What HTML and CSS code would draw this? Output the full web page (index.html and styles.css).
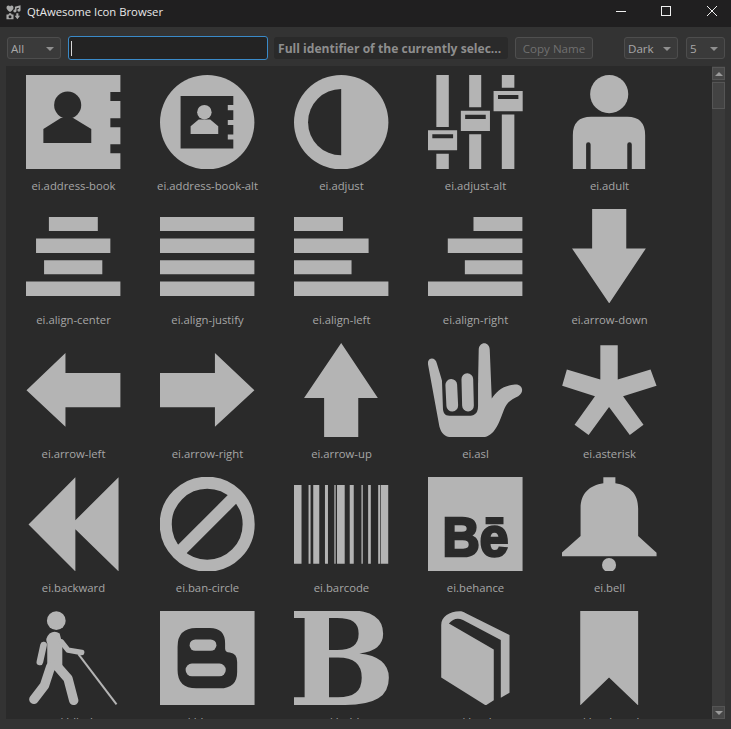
FILE: index.html
```html
<!DOCTYPE html>
<html lang="en">
<head>
<meta charset="utf-8">
<title>QtAwesome Icon Browser</title>
<link rel="stylesheet" href="styles.css">
</head>
<body>
<div class="window">
  <header class="titlebar">
    <svg class="appicon" viewBox="0 0 16 16" aria-hidden="true">
      <path d="M.5 2.800Q.5.500 2.500.500 3.700.500 4.300 1.700 4.900.500 6.100.500 8 .500 8 2.800 8 4.800 4.300 7.500.5 4.800.5 2.800Z"/>
      <path d="M9.500 1.800 15.500.3V5.600A1.700 1.500 0 1 1 13.800 4.100V2.800L11.200 3.400V6.400A1.700 1.500 0 1 1 9.500 4.900Z"/>
      <path d="M.5 10H2.600L3.300 8.700H5.400L6.100 10H8V15.300H.5ZM4.300 10.900A1.600 1.600 0 1 0 4.300 14.100 1.600 1.600 0 1 0 4.300 10.900Z" fill-rule="evenodd"/>
      <path d="M11 8.700H13.200V11.500H15L12.100 15.300 9.300 11.500H11Z"/>
    </svg>
    <span class="title">QtAwesome Icon Browser</span>
    <div class="winbtns">
      <svg class="winbtn" viewBox="0 0 46 27" aria-hidden="true"><path d="M22 11.500H32"/></svg>
      <svg class="winbtn" viewBox="0 0 46 27" aria-hidden="true"><rect x="22.500" y="6.500" width="9" height="9"/></svg>
      <svg class="winbtn" viewBox="0 0 46 27" aria-hidden="true"><path d="M22 6 32 16M32 6 22 16"/></svg>
    </div>
  </header>

  <div class="toolbar">
    <div class="combo combo-all"><span>All</span><i class="caret"></i></div>
    <div class="search"><i class="cursor"></i></div>
    <div class="namebox">Full identifier of the currently selec...</div>
    <div class="copy">Copy Name</div>
    <div class="spacer"></div>
    <div class="combo combo-dark"><span>Dark</span><i class="caret"></i></div>
    <div class="combo combo-five"><span>5</span><i class="caret"></i></div>
  </div>

  <main class="panel">
    <div class="grid">

      <figure class="cell">
        <svg class="icon" viewBox="0 0 94 94"><path class="fg" d="M0 0H94V17H84V26H94V43H84V52H94V69H84V78H94V94H0Z"/><circle class="bg" cx="41.500" cy="30" r="13.500"/><path class="bg" d="M17.300 53.700 34.700 42.700H47L65 53.700V67.700H17.300Z"/></svg>
        <figcaption>ei.address-book</figcaption>
      </figure>
      <figure class="cell">
        <svg class="icon" viewBox="0 0 94 94"><circle class="fg" cx="47" cy="47" r="47"/><path class="bg" d="M20.500 21H73V30H67.500V35H73V44.700H67.500V49.700H73V59.300H67.500V64.300H73V73.300H20.500Z"/><circle class="fg" cx="44.200" cy="37" r="7.200"/><path class="fg" d="M30.500 51 38.500 44.300H50L58 51V58.700H30.500Z"/></svg>
        <figcaption>ei.address-book-alt</figcaption>
      </figure>
      <figure class="cell">
        <svg class="icon" viewBox="0 0 94 94"><circle class="fg" cx="47" cy="47" r="47"/><path class="bg" d="M47 14A33 33 0 0 0 47 80Z"/></svg>
        <figcaption>ei.adjust</figcaption>
      </figure>
      <figure class="cell">
        <svg class="icon" viewBox="0 0 94 94"><path class="fg" d="M8.300 0H20.700V51.700H8.300ZM8.300 78.300H20.700V94H8.300ZM41 0H53V32H41ZM41 59H53V94H41ZM73.500 0H86V12.700H73.500ZM73.500 39.300H86V94H73.500Z"/><path class="fg" fill-rule="evenodd" d="M0 55H29V75H0ZM4.300 59V63H25V59ZM32.700 35.700H61.700V55.700H32.700ZM37 39.700V43.700H57.500V39.700ZM65.300 16H94.300V36H65.300ZM69.700 20V24H90V20Z"/></svg>
        <figcaption>ei.adjust-alt</figcaption>
      </figure>
      <figure class="cell">
        <svg class="icon" viewBox="0 0 94 94"><circle class="fg" cx="47" cy="19" r="19"/><path class="fg" d="M29 41.700H65Q82.800 41.700 82.800 60V94H69.500V69.300A2.200 2.200 0 0 0 65 69.300V94H28.500V69.300A2.200 2.200 0 0 0 24 69.300V94H10.800V60Q10.800 41.700 29 41.700Z"/></svg>
        <figcaption>ei.adult</figcaption>
      </figure>

      <figure class="cell">
        <svg class="icon" viewBox="0 0 94 94"><path class="fg" d="M22.800 8H71.500V22H22.800ZM10 29.500H84V43.700H10ZM18 51H76V65H18ZM0 72.300H94V86.700H0Z"/></svg>
        <figcaption>ei.align-center</figcaption>
      </figure>
      <figure class="cell">
        <svg class="icon" viewBox="0 0 94 94"><path class="fg" d="M0 8H94V22H0ZM0 29.500H94V43.700H0ZM0 51H94V65H0ZM0 72.300H94V86.700H0Z"/></svg>
        <figcaption>ei.align-justify</figcaption>
      </figure>
      <figure class="cell">
        <svg class="icon" viewBox="0 0 94 94"><path class="fg" d="M0 8H48.700V22H0ZM0 29.500H74.300V43.700H0ZM0 51H57.300V65H0ZM0 72.300H94V86.700H0Z"/></svg>
        <figcaption>ei.align-left</figcaption>
      </figure>
      <figure class="cell">
        <svg class="icon" viewBox="0 0 94 94"><path class="fg" d="M45.300 8H94V22H45.300ZM19.700 29.500H94V43.700H19.700ZM36.700 51H94V65H36.700ZM0 72.300H94V86.700H0Z"/></svg>
        <figcaption>ei.align-right</figcaption>
      </figure>
      <figure class="cell">
        <svg class="icon" viewBox="0 0 94 94"><path class="fg" d="M30 0H64V39.300H83.500L47 94 10 39.300H30Z"/></svg>
        <figcaption>ei.arrow-down</figcaption>
      </figure>

      <figure class="cell">
        <svg class="icon" viewBox="0 0 94 94"><path class="fg" d="M94 30V64H39.300V83.500L0.500 47 39.300 10V30Z"/></svg>
        <figcaption>ei.arrow-left</figcaption>
      </figure>
      <figure class="cell">
        <svg class="icon" viewBox="0 0 94 94"><path class="fg" d="M0 30V64H54.700V83.500L94 47 54.700 10V30Z"/></svg>
        <figcaption>ei.arrow-right</figcaption>
      </figure>
      <figure class="cell">
        <svg class="icon" viewBox="0 0 94 94"><path class="fg" d="M30 94H64V54.700H83.500L47 0 10 54.700H30Z"/></svg>
        <figcaption>ei.arrow-up</figcaption>
      </figure>
      <figure class="cell">
        <svg class="icon" viewBox="55.500 24 282 282"><path class="fg" d="M55 85C55 65 78 65 82 85L100 145 205 145 207 45C207 18 240 18 240 45L246 190C258 170 280 150 315 148 338 146 345 170 325 183 305 192 292 200 283 222 268 262 255 306 215 306H130C105 306 92 292 88 265Z"/><path class="bg" d="M97 130H205V212C205 238 190 241 178 241H120C105 241 100 232 100 215Z"/><path class="stroke-finger" d="M125 149 128 211M173 132 175 211"/></svg>
        <figcaption>ei.asl</figcaption>
      </figure>
      <figure class="cell">
        <svg class="icon" viewBox="457.500 24 282 282"><path class="fg" d="M572 31H624V133L722 103 740 152 640 183 701 268 660 299 598 215 537 299 495 268 556 183 458 152 472 103 572 133Z"/></svg>
        <figcaption>ei.asterisk</figcaption>
      </figure>

      <figure class="cell">
        <svg class="icon" viewBox="79.500 21 282 282"><path class="fg" d="M87 163 227 22V150L356 22V303L227 177V303Z"/></svg>
        <figcaption>ei.backward</figcaption>
      </figure>
      <figure class="cell">
        <svg class="icon" viewBox="0 0 94 94"><circle class="ring" cx="47" cy="47" r="41.300"/><path class="ring" d="M19 75 75 19"/></svg>
        <figcaption>ei.ban-circle</figcaption>
      </figure>
      <figure class="cell">
        <svg class="icon" viewBox="883.500 21 282 282"><path class="fg" d="M883 45H906V280H883ZM927 45H933V280H927ZM941 45H959V280H941ZM976 45H985V280H976ZM1004 45H1008V280H1004ZM1012 45H1035V280H1012ZM1050 45H1062V280H1050ZM1085 45H1089V280H1085ZM1105 45H1113V280H1105ZM1135 45H1141V280H1135ZM1143 45H1165V280H1143Z"/></svg>
        <figcaption>ei.barcode</figcaption>
      </figure>
      <figure class="cell">
        <svg class="icon" viewBox="85.500 21 282 282"><rect class="fg" x="85" y="21" width="283" height="282"/><text class="behance" x="129" y="258" textLength="197" lengthAdjust="spacingAndGlyphs">Bē</text></svg>
        <figcaption>ei.behance</figcaption>
      </figure>
      <figure class="cell">
        <svg class="icon" viewBox="487.500 21 282 282"><path class="fg" d="M611 22H647V40C688 46 715 70 715 115V197L770 247V258H487V247L543 197V115C543 70 570 46 611 40Z"/><circle class="fg" cx="628" cy="284" r="21"/></svg>
        <figcaption>ei.bell</figcaption>
      </figure>

      <figure class="cell">
        <svg class="icon" viewBox="79.500 33 282 282"><circle class="fg" cx="170" cy="62" r="28"/><path class="limb limb-arm" d="M132 135 121 185"/><path class="fg" d="M150 100Q165 90 180 100L188 130V200H143V130Q135 115 150 100Z"/><path class="limb limb-hand" d="M185 125 205 150 246 157"/><path class="limb limb-leg" d="M153 200 135 255 103 297M170 195 205 235 222 300"/><path class="limb limb-cane" d="M236 162 350 312"/></svg>
        <figcaption>ei.blind</figcaption>
      </figure>
      <figure class="cell">
        <svg class="icon" viewBox="481.500 33 282 282"><rect class="fg" x="481" y="33" width="283" height="283"/><path class="bg" d="M590 84H630Q676 84 676 130V145Q676 157 690 157 712 160 712 185V215Q712 264 660 264H590Q534 264 534 210V140Q534 84 590 84Z"/><rect class="fg" x="570" y="118" width="80" height="34" rx="17"/><rect class="fg" x="558" y="190" width="120" height="38" rx="19"/></svg>
        <figcaption>ei.blogger</figcaption>
      </figure>
      <figure class="cell">
        <svg class="icon" viewBox="0 0 94 94"><text class="boldb" x="47" y="94" text-anchor="middle">B</text></svg>
        <figcaption>ei.bold</figcaption>
      </figure>
      <figure class="cell">
        <svg class="icon" viewBox="85.500 33 282 282"><path class="fg" d="M125 232V75C125 50 150 34 180 34 187 34 192 36 197 39L329 105V277L303 292V120L190 60C172 52 160 58 148 70L282 148V300L258 315Z"/></svg>
        <figcaption>ei.book</figcaption>
      </figure>
      <figure class="cell">
        <svg class="icon" viewBox="487.500 33 282 282"><path class="fg" d="M542 33H715V315L628 232 542 315Z"/></svg>
        <figcaption>ei.bookmark</figcaption>
      </figure>

    </div>
    <div class="scrollbar">
      <div class="sb-btn"><i class="sb-up"></i></div>
      <div class="sb-thumb"></div>
      <div class="sb-track"></div>
      <div class="sb-btn"><i class="sb-down"></i></div>
    </div>
  </main>
</div>
</body>
</html>
```
FILE: styles.css
```css
* { box-sizing: border-box; }
html, body { margin: 0; padding: 0; height: 100%; background: #333333; overflow: hidden; }
body { font-family: "Open Sans", "Noto Sans", "Liberation Sans", sans-serif; }

.window { width: 731px; height: 729px; display: flex; flex-direction: column; background: #333333; }

/* title bar */
.titlebar { height: 27px; flex: none; display: flex; align-items: center; background: #201f20; padding-left: 6px; }
.appicon { width: 15px; height: 15px; fill: #a9a9a9; flex: none; margin-right: 6px; margin-bottom: 3px; }
.title { font-size: 11.300px; color: #e8e8e8; margin-bottom: 5px; }
.winbtns { margin-left: auto; display: flex; }
.winbtn { width: 46px; height: 27px; fill: none; stroke: #f0f0f0; stroke-width: 1; display: block; }
.winbtn:first-child { margin-right: -1px; }

/* toolbar */
.toolbar { height: 39px; flex: none; display: flex; align-items: center; padding: 3px 6px 0 7px; font-size: 11.600px; }
.combo { height: 22px; display: flex; align-items: center; justify-content: space-between; background: #3a3a3a; border: 1px solid #4d4d4d; border-radius: 3px; padding: 0 6px 0 3px; color: #a8a8a8; }
.combo-all { width: 54px; }
.combo-dark { width: 54px; }
.combo-five { width: 39px; margin-left: 8px; }
.caret { width: 0; height: 0; border-left: 4px solid transparent; border-right: 4px solid transparent; border-top: 4px solid #8f8f8f; margin-top: 1px; }
.search { width: 200px; height: 24px; margin-left: 7px; background: #232323; border: 1px solid #3a8ac8; border-radius: 3px; display: flex; align-items: center; padding-left: 2px; }
.cursor { width: 1px; height: 15px; background: #d8d8d8; }
.namebox { width: 234px; height: 22px; margin-left: 6px; background: #2a2a2a; border-radius: 3px; padding-left: 4px; color: #8e8e8e; font-weight: 700; font-size: 12.100px; line-height: 24px; white-space: nowrap; overflow: hidden; }
.copy { width: 78px; height: 22px; margin-left: 7px; background: #3a3a3a; border: 1px solid #4f4f4f; border-radius: 3px; color: #707070; text-align: center; line-height: 21px; }
.spacer { flex: 1; }

/* icon panel */
.panel { height: 653px; flex: none; margin: 0 6px; background: #2a2a2a; display: flex; overflow: hidden; }
.grid { flex: 1; display: grid; grid-template-columns: repeat(5, 133px); grid-auto-rows: 133px; gap: 1px; padding: 9px 0 0 1px; align-content: start; overflow: hidden; }
.cell { margin: 0; display: flex; flex-direction: column; align-items: center; }
.icon { width: 94.400px; height: 94.400px; display: block; flex: none; }
figcaption { margin-top: 9px; font-size: 11.300px; line-height: 16px; color: #a6a6a6; white-space: nowrap; }

.fg { fill: #b4b4b4; }
.bg { fill: #2a2a2a; }
.ring { fill: none; stroke: #b4b4b4; stroke-width: 12px; }
.stroke-finger { fill: none; stroke: #b4b4b4; stroke-width: 35px; stroke-linecap: round; }
.limb { fill: none; stroke: #b4b4b4; stroke-linecap: round; stroke-linejoin: round; }
.limb-arm { stroke-width: 20px; }
.limb-hand { stroke-width: 16px; }
.limb-leg { stroke-width: 28px; }
.limb-cane { stroke-width: 6px; stroke-linecap: butt; }
.behance { font-family: "Liberation Sans", sans-serif; font-weight: 700; font-size: 166px; fill: #2a2a2a; stroke: #2a2a2a; stroke-width: 8px; }
.boldb { font-family: "DejaVu Serif", serif; font-weight: 700; font-size: 129px; fill: #b4b4b4; }

/* scrollbar */
.scrollbar { width: 13px; flex: none; background: #3a3a3a; display: flex; flex-direction: column; padding-top: 1px; }
.sb-btn { height: 13px; flex: none; background: #474747; border: 1px solid #555555; display: flex; align-items: center; justify-content: center; }
.sb-up { width: 0; height: 0; border-left: 4px solid transparent; border-right: 4px solid transparent; border-bottom: 4px solid #9a9a9a; }
.sb-down { width: 0; height: 0; border-left: 4px solid transparent; border-right: 4px solid transparent; border-top: 4px solid #9a9a9a; }
.sb-thumb { height: 27px; margin-top: 2px; flex: none; background: #434343; border: 1px solid #555555; }
.sb-track { flex: 1; }
```
